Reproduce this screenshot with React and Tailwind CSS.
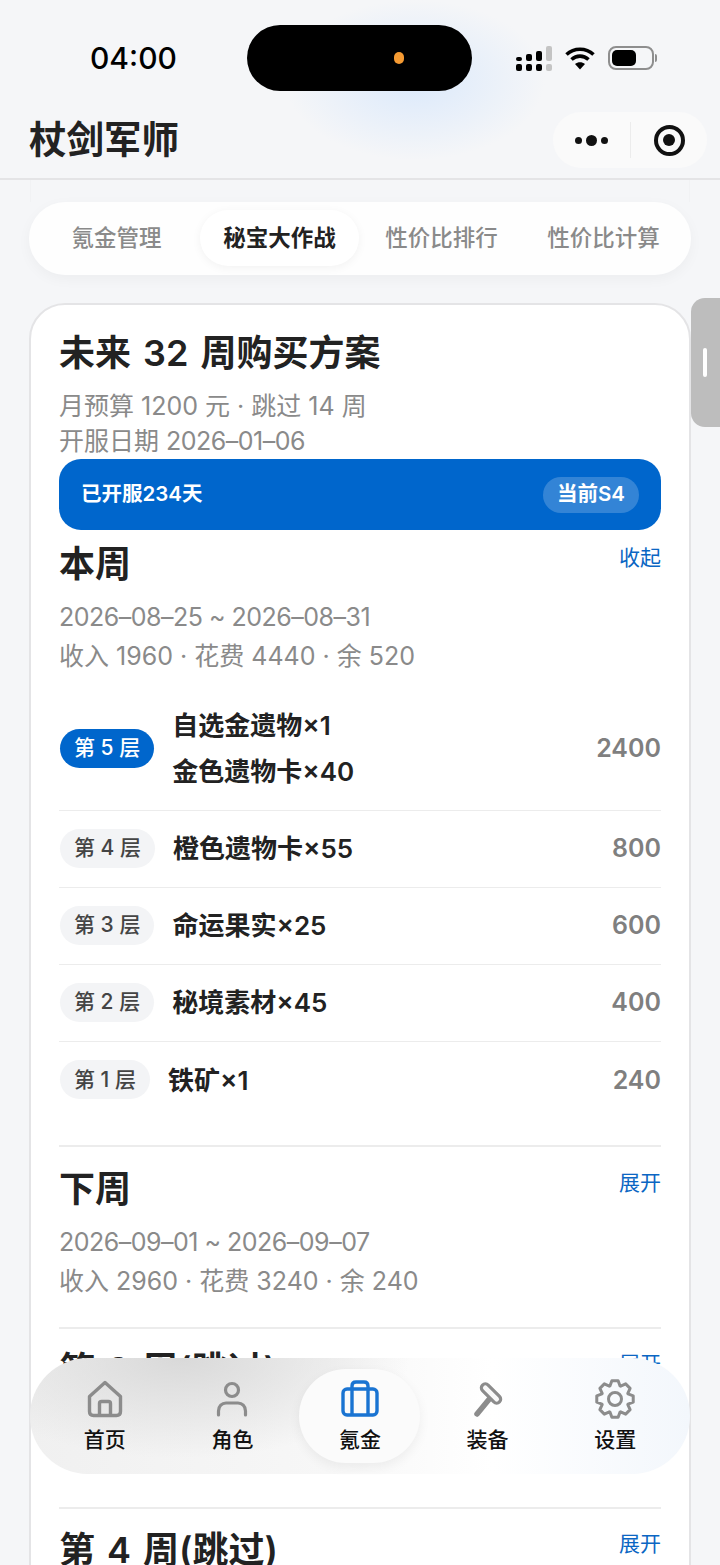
const cjk = { fontFamily: 'Inter, "Noto Sans CJK SC", sans-serif' }

const tabs = [
  { label: '氪金管理', box: 'w-[163px]' },
  { label: '秘宝大作战', box: 'w-[159px] ml-[2px] bg-white text-[#222] font-semibold shadow-[0_2px_10px_rgba(0,0,0,0.05)]' },
  { label: '性价比排行', box: 'w-[159px] ml-[3px]' },
  { label: '性价比计算', box: 'w-[159px] ml-[3px]' },
]

const rows = [
  { level: 5, names: ['自选金遗物×1', '金色遗物卡×40'], cost: 2400, active: true },
  { level: 4, names: ['橙色遗物卡×55'], cost: 800 },
  { level: 3, names: ['命运果实×25'], cost: 600 },
  { level: 2, names: ['秘境素材×45'], cost: 400 },
  { level: 1, names: ['铁矿×1'], cost: 240 },
]

// 8 toothed outline for the settings gear
const gearPath = Array.from({ length: 8 }, (_, i) => {
  const a = (i * Math.PI) / 4 - Math.PI / 2
  const pt = (r, d) => `${(20 + r * Math.cos(a + d)).toFixed(2)} ${(20 + r * Math.sin(a + d)).toFixed(2)}`
  return `${i === 0 ? 'M' : 'L'}${pt(14, -0.37)}L${pt(18.5, -0.17)}L${pt(18.5, 0.17)}L${pt(14, 0.37)}`
}).join('') + 'Z'

function SignalIcon() {
  const cols = [
    { x: 0, top: 11, color: '#000' },
    { x: 10, top: 8, color: '#000' },
    { x: 20, top: 5, color: '#000' },
    { x: 30, top: 0, color: '#c4c4c4' },
  ]
  return (
    <svg width="36" height="25" viewBox="0 0 36 25">
      {cols.map(c => (
        <g key={c.x} fill={c.color}>
          <rect x={c.x} y={c.top} width="6" height={15 - c.top} rx="2" />
          <rect x={c.x} y="18" width="6" height="7" rx="2" />
        </g>
      ))}
    </svg>
  )
}

function WifiIcon() {
  return (
    <svg width="30" height="24" viewBox="0 0 30 24" fill="none" stroke="#000" strokeWidth="3.6">
      <path d="M1.5 8.5C9 1.5 21 1.5 28.5 8.5" />
      <path d="M6.5 13.5C11.5 9 18.5 9 23.5 13.5" />
      <path d="M15 23.5L10 18C13 15.5 17 15.5 20 18Z" fill="#000" stroke="none" />
    </svg>
  )
}

function BatteryIcon() {
  return (
    <div className="flex items-center gap-[1px]">
      <div className="w-[46px] h-[24px] rounded-[8px] border-2 border-[#8e8e8e] p-[2px]">
        <div className="w-[24px] h-full rounded-[5px] bg-black" />
      </div>
      <div className="w-[2px] h-[8px] rounded-r-full bg-[#8e8e8e]" />
    </div>
  )
}

function HomeIcon() {
  return (
    <svg width="38" height="38" viewBox="0 0 38 38" fill="none" stroke="#8c8c8c" strokeWidth="3.4" strokeLinejoin="round">
      <path d="M19 2.5L34.5 16.5V31.5Q34.5 35.5 30.5 35.5H7.5Q3.5 35.5 3.5 31.5V16.5Z" />
      <path d="M13.5 35V23.5Q13.5 21.5 15.5 21.5H22.5Q24.5 21.5 24.5 23.5V35" />
    </svg>
  )
}

function UserIcon() {
  return (
    <svg width="38" height="38" viewBox="0 0 38 38" fill="none" stroke="#8c8c8c" strokeWidth="3.2" strokeLinecap="round">
      <circle cx="19" cy="10" r="6.5" />
      <path d="M5.5 35V31C5.5 26 9 23 13 23H25C29 23 32.5 26 32.5 31V35" />
    </svg>
  )
}

function BagIcon() {
  return (
    <svg width="38" height="38" viewBox="0 0 38 38" fill="none" stroke="#1a74d2" strokeWidth="3.4" strokeLinejoin="round">
      <rect x="2" y="9" width="34" height="26" rx="4" />
      <path d="M11 35V6Q11 2 15 2H23Q27 2 27 6V35" />
    </svg>
  )
}

function HammerIcon() {
  return (
    <svg width="38" height="38" viewBox="0 0 38 38" fill="none">
      <path d="M8 34L22 17" stroke="#8c8c8c" strokeWidth="5.5" strokeLinecap="round" />
      <rect x="10" y="9.5" width="24" height="8" rx="4" transform="rotate(45 22 13.5)" stroke="#8c8c8c" strokeWidth="3.2" fill="#f9f9f9" />
    </svg>
  )
}

function GearIcon() {
  return (
    <svg width="40" height="40" viewBox="0 0 40 40" fill="none" stroke="#8c8c8c" strokeWidth="3" strokeLinejoin="round">
      <path d={gearPath} />
      <circle cx="20" cy="20" r="6.5" />
    </svg>
  )
}

function TierRow({ row, last }) {
  return (
    <div className={`flex items-center ${row.active ? 'h-[123px]' : 'h-[77px]'} ${last ? '' : 'border-b border-[#ececec]'}`}>
      <span className={`ml-[1px] px-[14px] h-[39px] flex items-center rounded-full text-[21px] font-medium whitespace-pre -translate-y-[1px] ${row.active ? 'bg-[#0066cc] text-white' : 'bg-[#f3f4f6] text-[#444]'}`}>
        第 {row.level} 层
      </span>
      <div className="flex-1 pl-[18px] text-[26px] font-semibold text-[#222] leading-[46px]">
        {row.names.map(n => <div key={n}>{n}</div>)}
      </div>
      <span className="text-[25px] font-semibold text-[#7f7f7f]">{row.cost}</span>
    </div>
  )
}

function WeekHead({ title, action }) {
  return (
    <div className="flex justify-between items-start">
      <div className="text-[36px] font-semibold text-[#222] leading-[44px] [word-spacing:3px]">{title}</div>
      <div className="text-[21px] text-[#0b66c3] leading-[32px]">{action}</div>
    </div>
  )
}

function WeekMeta({ dates, summary }) {
  return (
    <div className="mt-[12px] text-[25px] text-[#8a8a8a] leading-[39px]">
      <div className="tracking-[-0.5px]">{dates}</div>
      <div>{summary}</div>
    </div>
  )
}

export default function App() {
  return (
    <div className="relative w-[720px] h-[1565px] overflow-hidden bg-[#f5f6f8]" style={cjk}>
      {/* header */}
      <div className="relative h-[180px] border-b-2 border-[#e4e4e6] bg-[#f5f6f8]">
        <div className="absolute left-[285px] top-0 w-[260px] h-[160px] bg-[radial-gradient(closest-side,#dbe9fb,transparent)]" />
        <div className="relative flex items-center h-[116px] pl-[90px] pr-[63px]">
          <span className="w-[157px] text-[30px] font-medium text-black">04:00</span>
          <div className="w-[225px] h-[66px] rounded-full bg-black flex items-center justify-end pr-[68px]">
            <span className="w-[10px] h-[12px] rounded-full bg-[#f59a32]" />
          </div>
          <div className="flex-1 flex items-center justify-between pl-[44px]">
            <SignalIcon />
            <WifiIcon />
            <BatteryIcon />
          </div>
        </div>
        <div className="relative flex items-center justify-between pl-[29px] pr-[13px] h-[48px]">
          <span className="text-[37.5px] font-semibold text-[#222]">杖剑军师</span>
          <div className="w-[154px] h-[56px] rounded-full bg-[#fafafa] flex items-center">
            <div className="flex-1 flex items-center justify-center gap-[4px] border-r border-[#ececec] h-[36px]">
              <span className="w-[7px] h-[7px] rounded-full bg-[#111]" />
              <span className="w-[11px] h-[11px] rounded-full bg-[#111]" />
              <span className="w-[7px] h-[7px] rounded-full bg-[#111]" />
            </div>
            <div className="w-[76px] flex items-center justify-center">
              <div className="w-[31px] h-[31px] rounded-full border-[4px] border-[#111] flex items-center justify-center">
                <span className="w-[12px] h-[12px] rounded-full bg-[#111]" />
              </div>
            </div>
          </div>
        </div>
      </div>

      {/* tabs */}
      <div className="px-[29px]">
        <div className="h-[22px] mx-[1px] border-x border-[#f1f2f4]" />
        <div className="flex items-start pt-[8px] h-[73px] px-[6px] rounded-full bg-white/90 shadow-[0_4px_14px_rgba(0,0,0,0.04)] text-[22.5px] font-medium text-[#8a8a8a]">
          {tabs.map(t => (
            <span key={t.label} className={`h-[56px] flex items-center justify-center rounded-full ${t.box}`}>
              {t.label}
            </span>
          ))}
        </div>
      </div>

      {/* plan card */}
      <div className="mx-[29px] mt-[28px] px-[28px] pt-[23px] rounded-t-[36px] border-2 border-[#e4e4e6] bg-white">
        <div className="text-[36px] font-semibold text-[#222] leading-[50px] [word-spacing:3px]">未来 32 周购买方案</div>
        <div className="mt-[10px] text-[25px] text-[#8a8a8a] leading-[36px]">月预算 1200 元 · 跳过 14 周</div>
        <div className="text-[25px] text-[#8a8a8a] leading-[35px]">开服日期 <span className="tracking-[-0.5px]">2026–01–06</span></div>

        <div className="flex items-center justify-between h-[71px] px-[22px] rounded-[22px] bg-[#0066cc] text-white text-[20.5px] font-semibold">
          <span>已开服234天</span>
          <span className="h-[36px] px-[14px] flex items-center rounded-full bg-white/20">当前S4</span>
        </div>

        <div className="mt-[12px]">
          <WeekHead title="本周" action="收起" />
          <WeekMeta dates="2026–08–25 ~ 2026–08–31" summary="收入 1960 · 花费 4440 · 余 520" />
          <div className="mt-[12px]">
            {rows.map((r, i) => <TierRow key={r.level} row={r} last={i === rows.length - 1} />)}
          </div>
        </div>

        <div className="mt-[26px] pt-[20px] pb-[26px] border-t-2 border-[#ececec]">
          <WeekHead title="下周" action="展开" />
          <WeekMeta dates="2026–09–01 ~ 2026–09–07" summary="收入 2960 · 花费 3240 · 余 240" />
        </div>

        <div className="h-[180px] pt-[19px] border-t-2 border-[#ececec]">
          <WeekHead title="第 3 周(跳过)" action="展开" />
        </div>

        <div className="pt-[19px] border-t-2 border-[#ececec]">
          <WeekHead title="第 4 周(跳过)" action="展开" />
        </div>
      </div>

      {/* handle on the right edge */}
      <div className="absolute right-0 top-[298px] w-[29px] h-[129px] rounded-l-[14px] bg-[#bdbdbd] flex items-center pl-[12px]">
        <span className="w-[4px] h-[29px] rounded-full bg-white" />
      </div>

      {/* bottom nav */}
      <div className="absolute left-[30px] top-[1358px] w-[660px] h-[116px] rounded-full bg-[radial-gradient(ellipse_230px_100px_at_150px_0px,#d9d9d9,transparent),linear-gradient(90deg,#f0f0f0_0%,#f7f7f7_45%,#ffffff_70%,#f3f7fc_100%)] flex items-center px-[11px]">
        {[
          { label: '首页', icon: <HomeIcon /> },
          { label: '角色', icon: <UserIcon /> },
          { label: '氪金', icon: <BagIcon />, active: true },
          { label: '装备', icon: <HammerIcon /> },
          { label: '设置', icon: <GearIcon /> },
        ].map(item => (
          <div key={item.label} className="flex-1 flex justify-center">
            <div className={`w-[121px] h-[94px] flex flex-col items-center justify-center gap-[6px] rounded-full text-[21px] font-medium text-[#111] ${item.active ? 'bg-[#fbfbfb] shadow-[0_4px_12px_rgba(0,0,0,0.06)]' : ''}`}>
              <div className="h-[38px] flex items-center">{item.icon}</div>
              <span className="leading-[28px] translate-y-[2px]">{item.label}</span>
            </div>
          </div>
        ))}
      </div>
    </div>
  )
}
